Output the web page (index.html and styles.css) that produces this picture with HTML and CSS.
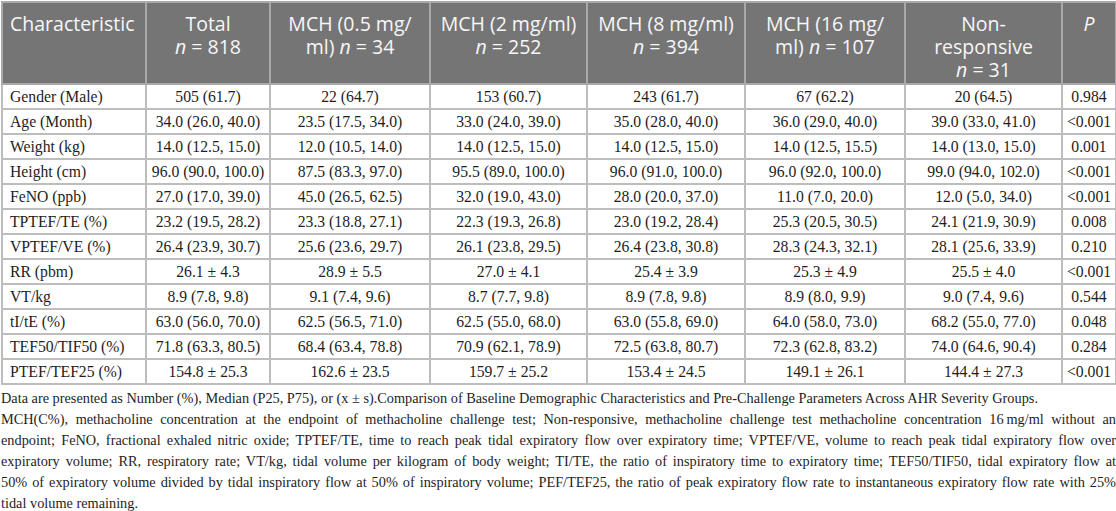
FILE: index.html
```html
<!DOCTYPE html>
<html lang="en">
<head>
<meta charset="utf-8">
<title>Baseline characteristics across AHR severity groups</title>
<link rel="stylesheet" href="styles.css">
</head>
<body>
<div class="page">
  <table class="data">
    <colgroup>
      <col class="c-char">
      <col class="c-total">
      <col class="c-g1">
      <col class="c-g2">
      <col class="c-g3">
      <col class="c-g4">
      <col class="c-g5">
      <col class="c-p">
    </colgroup>
    <thead>
      <tr>
        <th class="left">Characteristic</th>
        <th>Total<br><i>n</i> = 818</th>
        <th>MCH (0.5 mg/<br>ml) <i>n</i> = 34</th>
        <th>MCH (2 mg/ml)<br><i>n</i> = 252</th>
        <th>MCH (8 mg/ml)<br><i>n</i> = 394</th>
        <th>MCH (16 mg/<br>ml) <i>n</i> = 107</th>
        <th>Non-<br>responsive<br><i>n</i> = 31</th>
        <th><i>P</i></th>
      </tr>
    </thead>
    <tbody>
      <tr><td class="left">Gender (Male)</td><td>505 (61.7)</td><td>22 (64.7)</td><td>153 (60.7)</td><td>243 (61.7)</td><td>67 (62.2)</td><td>20 (64.5)</td><td>0.984</td></tr>
      <tr><td class="left">Age (Month)</td><td>34.0 (26.0, 40.0)</td><td>23.5 (17.5, 34.0)</td><td>33.0 (24.0, 39.0)</td><td>35.0 (28.0, 40.0)</td><td>36.0 (29.0, 40.0)</td><td>39.0 (33.0, 41.0)</td><td>&lt;0.001</td></tr>
      <tr><td class="left">Weight (kg)</td><td>14.0 (12.5, 15.0)</td><td>12.0 (10.5, 14.0)</td><td>14.0 (12.5, 15.0)</td><td>14.0 (12.5, 15.0)</td><td>14.0 (12.5, 15.5)</td><td>14.0 (13.0, 15.0)</td><td>0.001</td></tr>
      <tr><td class="left">Height (cm)</td><td>96.0 (90.0, 100.0)</td><td>87.5 (83.3, 97.0)</td><td>95.5 (89.0, 100.0)</td><td>96.0 (91.0, 100.0)</td><td>96.0 (92.0, 100.0)</td><td>99.0 (94.0, 102.0)</td><td>&lt;0.001</td></tr>
      <tr><td class="left">FeNO (ppb)</td><td>27.0 (17.0, 39.0)</td><td>45.0 (26.5, 62.5)</td><td>32.0 (19.0, 43.0)</td><td>28.0 (20.0, 37.0)</td><td>11.0 (7.0, 20.0)</td><td>12.0 (5.0, 34.0)</td><td>&lt;0.001</td></tr>
      <tr><td class="left">TPTEF/TE (%)</td><td>23.2 (19.5, 28.2)</td><td>23.3 (18.8, 27.1)</td><td>22.3 (19.3, 26.8)</td><td>23.0 (19.2, 28.4)</td><td>25.3 (20.5, 30.5)</td><td>24.1 (21.9, 30.9)</td><td>0.008</td></tr>
      <tr><td class="left">VPTEF/VE (%)</td><td>26.4 (23.9, 30.7)</td><td>25.6 (23.6, 29.7)</td><td>26.1 (23.8, 29.5)</td><td>26.4 (23.8, 30.8)</td><td>28.3 (24.3, 32.1)</td><td>28.1 (25.6, 33.9)</td><td>0.210</td></tr>
      <tr><td class="left">RR (pbm)</td><td>26.1 ± 4.3</td><td>28.9 ± 5.5</td><td>27.0 ± 4.1</td><td>25.4 ± 3.9</td><td>25.3 ± 4.9</td><td>25.5 ± 4.0</td><td>&lt;0.001</td></tr>
      <tr><td class="left">VT/kg</td><td>8.9 (7.8, 9.8)</td><td>9.1 (7.4, 9.6)</td><td>8.7 (7.7, 9.8)</td><td>8.9 (7.8, 9.8)</td><td>8.9 (8.0, 9.9)</td><td>9.0 (7.4, 9.6)</td><td>0.544</td></tr>
      <tr><td class="left">tI/tE (%)</td><td>63.0 (56.0, 70.0)</td><td>62.5 (56.5, 71.0)</td><td>62.5 (55.0, 68.0)</td><td>63.0 (55.8, 69.0)</td><td>64.0 (58.0, 73.0)</td><td>68.2 (55.0, 77.0)</td><td>0.048</td></tr>
      <tr><td class="left">TEF50/TIF50 (%)</td><td>71.8 (63.3, 80.5)</td><td>68.4 (63.4, 78.8)</td><td>70.9 (62.1, 78.9)</td><td>72.5 (63.8, 80.7)</td><td>72.3 (62.8, 83.2)</td><td>74.0 (64.6, 90.4)</td><td>0.284</td></tr>
      <tr><td class="left">PTEF/TEF25 (%)</td><td>154.8 ± 25.3</td><td>162.6 ± 23.5</td><td>159.7 ± 25.2</td><td>153.4 ± 24.5</td><td>149.1 ± 26.1</td><td>144.4 ± 27.3</td><td>&lt;0.001</td></tr>
    </tbody>
  </table>
  <div class="notes">
    <p class="note">Data are presented as Number (%), Median (P25, P75), or (x ± s).Comparison of Baseline Demographic Characteristics and Pre-Challenge Parameters Across AHR Severity Groups.</p>
    <p class="note">
      <span class="ln">MCH(C%), methacholine concentration at the endpoint of methacholine challenge test; Non-responsive, methacholine challenge test methacholine concentration 16&thinsp;mg/ml without an</span>
      <span class="ln">endpoint; FeNO, fractional exhaled nitric oxide; TPTEF/TE, time to reach peak tidal expiratory flow over expiratory time; VPTEF/VE, volume to reach peak tidal expiratory flow over</span>
      <span class="ln">expiratory volume; RR, respiratory rate; VT/kg, tidal volume per kilogram of body weight; TI/TE, the ratio of inspiratory time to expiratory time; TEF50/TIF50, tidal expiratory flow at</span>
      <span class="ln">50% of expiratory volume divided by tidal inspiratory flow at 50% of inspiratory volume; PEF/TEF25, the ratio of peak expiratory flow rate to instantaneous expiratory flow rate with 25%</span>
      <span class="ln last">tidal volume remaining.</span>
    </p>
  </div>
</div>
</body>
</html>
```

FILE: styles.css
```css
html, body {
  margin: 0;
  padding: 0;
  background: #ffffff;
}

.page {
  width: 1116px;
  padding-top: 1px;
  padding-left: 1px;
  box-sizing: border-box;
}

.data {
  width: 1114px;
  border-collapse: collapse;
  table-layout: fixed;
  font-family: "Liberation Serif", "Times New Roman", serif;
  font-size: 15.7px;
  color: #1e1e1e;
}

.c-char { width: 144px; }
.c-total { width: 124px; }
.c-g1 { width: 160px; }
.c-g2 { width: 157px; }
.c-g3 { width: 158px; }
.c-g4 { width: 160px; }
.c-g5 { width: 157px; }
.c-p { width: 54px; }

.data th {
  background: #757575;
  color: #f7f7f7;
  font-family: "Open Sans", "Noto Sans", sans-serif;
  font-weight: 400;
  font-size: 19.5px;
  line-height: 23px;
  padding: 9px 4px 2px;
  text-align: center;
  vertical-align: top;
  border: 2px solid #a9a9a9;
}

.data th.left {
  text-align: left;
  padding-left: 7px;
}

.data td {
  border: 2px solid #bdbdbd;
  line-height: 23px;
  padding: 0 4px;
  text-align: center;
  white-space: nowrap;
}

.data td.left {
  text-align: left;
  padding-left: 7px;
}

.notes {
  font-family: "Liberation Serif", "Times New Roman", serif;
  font-size: 14.3px;
  line-height: 21px;
  color: #1e1e1e;
  padding-top: 3px;
}

.note {
  margin: 0;
  text-align: justify;
}

.ln {
  display: block;
  text-align: justify;
  text-align-last: justify;
}

.ln.last {
  text-align-last: left;
}
```
